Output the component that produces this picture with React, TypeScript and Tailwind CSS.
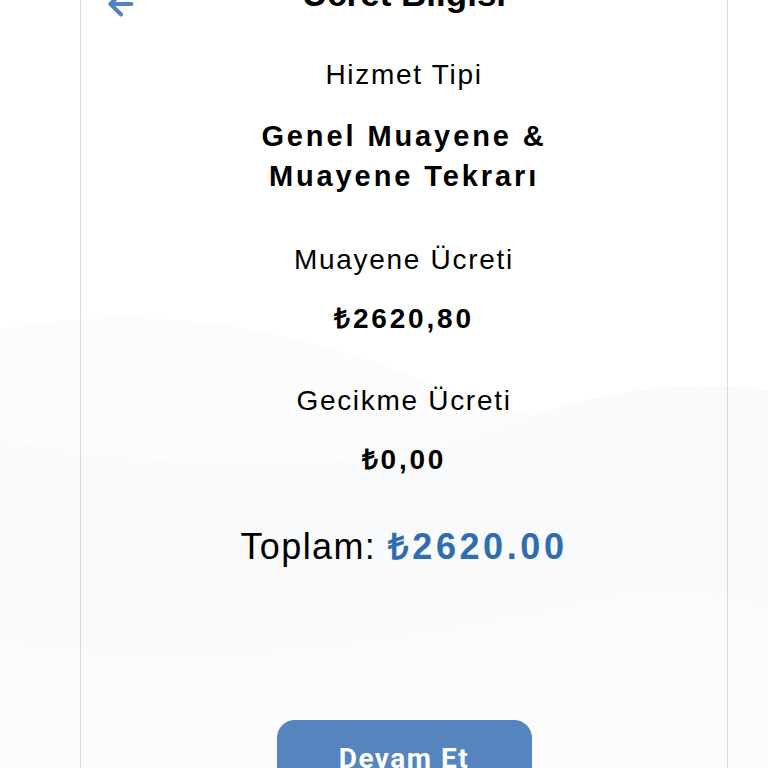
import React from 'react';
import { ArrowLeft } from 'lucide-react';

const fees = [
    { label: 'Muayene Ücreti', value: '₺2620,80' },
    { label: 'Gecikme Ücreti', value: '₺0,00' },
];

const Waves: React.FC = () => (
    <svg className="absolute inset-0 w-full h-full" viewBox="0 0 768 768" preserveAspectRatio="none">
        <path d="M0 330 C 150 300, 300 330, 420 380 C 520 420, 640 440, 768 470 L768 768 L0 768 Z" fill="#fcfcfd" />
        <path d="M0 440 C 180 470, 360 480, 520 420 C 620 385, 700 380, 768 390 L768 768 L0 768 Z" fill="#f9fafb" />
        <path d="M0 640 C 200 680, 420 640, 600 600 C 680 585, 730 600, 768 610 L768 768 L0 768 Z" fill="#fbfbfc" />
    </svg>
);

const App: React.FC = () => {
    return (
        <div className="relative w-full h-[768px] overflow-hidden bg-white" style={{ fontFamily: '"Liberation Sans", Arial, sans-serif' }}>
            <Waves />
            <div className="relative ml-[80px] w-[648px] -mt-[26px] border-x border-[#d9d9dc] min-h-[900px] flex flex-col items-center text-black">
                {/* Header */}
                <div className="relative w-full h-[40px] flex items-center justify-center">
                    <ArrowLeft size={36} strokeWidth={2.6} className="absolute left-[22px] top-[12px] text-[#4f83c4]" />
                    <h2 className="text-[35px] leading-[40px] font-bold">Ücret Bilgisi</h2>
                </div>

                <p className="mt-[43px] text-[28px] leading-[36px] tracking-[1.7px]">Hizmet Tipi</p>
                <p className="mt-[23px] text-[29px] leading-[40px] font-bold tracking-[0.1em] text-center">
                    Genel Muayene &amp;
                    <br />
                    Muayene Tekrarı
                </p>

                {fees.map((fee) => (
                    <div key={fee.label} className="flex flex-col items-center mt-[46px]">
                        <p className="text-[28px] leading-[36px] tracking-[1.7px]">{fee.label}</p>
                        <p className="mt-[23px] text-[28px] leading-[36px] font-bold tracking-[0.1em]">{fee.value}</p>
                    </div>
                ))}

                <p className="mt-[47px] text-[36px] leading-[44px] tracking-[1.4px]">
                    Toplam: <span className="font-bold text-[#2f6cb0] tracking-[0.1em]">₺2620.00</span>
                </p>

                <button
                    className="mt-[151px] w-[255px] h-[78px] rounded-[18px] bg-[#5585bf] text-white text-[28px] font-bold tracking-[1.5px]"
                    style={{ fontFamily: 'Roboto, "Liberation Sans", sans-serif' }}
                >
                    Devam Et
                </button>
            </div>
        </div>
    );
};

export default App;
